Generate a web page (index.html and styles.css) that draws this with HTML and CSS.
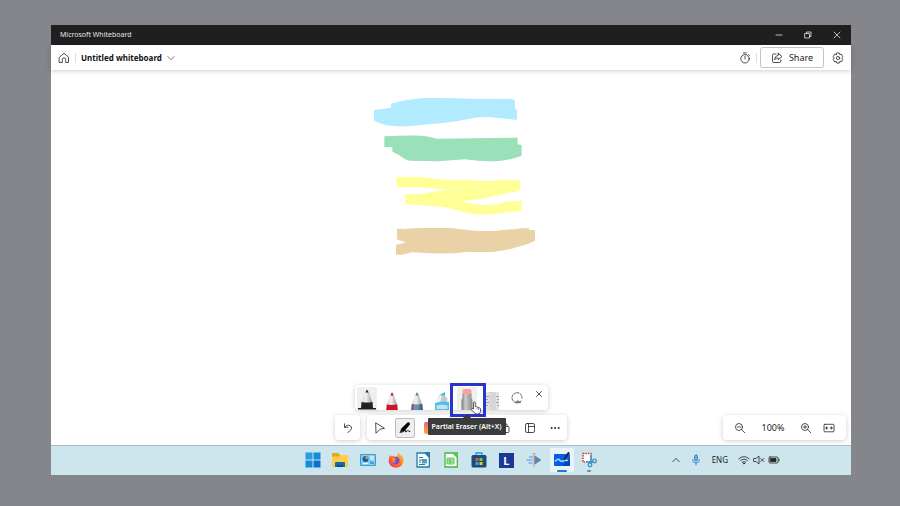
FILE: index.html
```html
<!DOCTYPE html>
<html lang="en">
<head>
<meta charset="utf-8">
<title>Microsoft Whiteboard</title>
<link rel="stylesheet" href="styles.css">
</head>
<body>
<div class="screen">
  <header class="titlebar">
    <span class="app-name">Microsoft Whiteboard</span>
    <div class="window-controls">
      <button aria-label="Minimize"><svg class="i8" viewBox="0 0 8 8"><path d="M1 4h6"/></svg></button>
      <button aria-label="Restore"><svg class="i8" viewBox="0 0 8 8"><path d="M1 2.5h4.500v4.500h-4.500zM2.500 2.500v-1.500h4.500v4.500h-1.500"/></svg></button>
      <button aria-label="Close"><svg class="i8" viewBox="0 0 8 8"><path d="M1 1l6 6M7 1l-6 6"/></svg></button>
    </div>
  </header>

  <nav class="header">
    <button class="plain" aria-label="Home"><svg class="i12" viewBox="0 0 12 12"><path d="M1.500 5.200L6 1.200l4.500 4V10.500H7.700V7.500a1.700 1.700 0 0 0-3.400 0v3H1.500z"/></svg></button>
    <span class="rule"></span>
    <button class="board-name">Untitled whiteboard <svg class="chevron" viewBox="0 0 8 8"><path d="M.7 2.300L4 5.700 7.300 2.300"/></svg></button>
    <div class="header-actions">
      <button class="plain" aria-label="Timer"><svg class="i12" viewBox="0 0 12 12"><circle cx="6" cy="6.800" r="4.200"/><path d="M4.500 1h3M6 4.300V7M9.500 2.500l1 1"/></svg></button>
      <span class="rule"></span>
      <button class="share"><svg class="i12" viewBox="0 0 12 12"><path d="M5 2H2.800Q1.500 2 1.500 3.300v6q0 1.200 1.300 1.200h5.700q1.300 0 1.300-1.200V8M7.200 1.300L11 4.600 7.200 7.700V6Q5 5.800 3.500 7.700 4 3.600 7.200 3.200z"/></svg>Share</button>
      <button class="plain" aria-label="Settings"><svg class="i12" viewBox="0 0 12 12"><circle cx="6" cy="6" r="1.600"/><path d="M4.700 1Q6 .5 7.300 1L7.700 2.600 9.300 2.100 10.800 4.600 9.700 6l1.100 1.400-1.500 2.500-1.600-.5L7.300 11Q6 11.500 4.700 11L4.300 9.400 2.700 9.900 1.200 7.400 2.300 6 1.200 4.600 2.700 2.100 4.300 2.600z"/></svg></button>
    </div>
  </nav>

  <main class="canvas">
    <svg class="drawing" viewBox="0 0 570 540" role="img" aria-label="Highlighter strokes">
      <path fill="#b2eaff" d="M42 75Q68 72 93 68V56Q140 42 200 39Q270 38 330 41L456 42Q465 44 465 51V73H471V105Q440 101 410 98Q365 93 325 102Q260 115 222 116Q185 120 155 123Q110 126 78 121Q60 115 42 107z"/>
      <path fill="#9ae0b8" d="M73 154Q130 151 185 152Q205 154 231 161L473 158V178L485 180V212Q455 224 417 228Q370 231 315 223Q275 226 235 229L150 227Q140 227 131 220Q115 207 97 200V186H73z"/>
      <path fill="#ffff98" d="M110 276H185Q210 281 265 285H320Q380 291 430 285H480V317Q470 321 435 326Q405 334 365 341L302 349Q330 354 345 358Q380 362 412 357Q430 350 455 348H485V379Q455 379 425 385Q375 392 332 386Q305 381 280 373Q250 364 220 364L135 357V327H185Q220 320 265 316H312Q255 316 180 307H110z"/>
      <path fill="#ebd2a6" d="M111 431H128L132 433Q155 429 185 429H275Q320 435 355 438H405Q430 433 465 433Q480 429 505 429L508 435H525V467Q505 478 475 485Q445 495 400 501L320 501Q270 507 215 505L155 502Q135 508 126 509H108V479Q125 477 138 472Q120 468 111 463z"/>
    </svg>

    <div class="dock">
      <div class="pen-tray">
        <button class="pen pen-active" aria-label="Black pen"><svg viewBox="0 0 20 23"><defs><linearGradient id="cone"><stop stop-color="#d0d0d0"/><stop offset=".4" stop-color="#f2f2f2"/><stop offset="1" stop-color="#999"/></linearGradient></defs><path fill="url(#cone)" d="M4.500 16L8.300 4.500h3.400l3.800 11.500z"/><path fill="#222" d="M8.300 5.500L10 2.500 11.700 5.500zM4.500 15q5.500 1 11 0l.5 6H4zM1 21h18v1.500H1z"/></svg></button>
        <button class="pen" aria-label="Red pen"><svg viewBox="0 0 20 23"><path fill="url(#cone)" d="M4.800 18L8.300 7.500h3.400l3.500 10.500z"/><path fill="#ca1829" d="M8.300 8.500L10 5l1.700 3.500zM4.700 17.500q5.300.8 10.600 0l.5 5.500H4.200z"/></svg></button>
        <button class="pen" aria-label="Galaxy pen"><svg viewBox="0 0 20 23"><defs><linearGradient id="galaxy"><stop stop-color="#56446d"/><stop offset=".3" stop-color="#9d80ad"/><stop offset=".6" stop-color="#4f9bab"/><stop offset="1" stop-color="#403b74"/></linearGradient></defs><path fill="url(#cone)" d="M4.800 18L8.300 7.500h3.400l3.500 10.500z"/><path fill="#368b80" d="M8.300 8.500L10 5l1.700 3.500z"/><path fill="url(#galaxy)" d="M4.700 17q5.300.8 10.600 0l.5 6H4.200z"/></svg></button>
        <button class="pen" aria-label="Highlighter"><svg viewBox="0 0 20 23"><path fill="#37bdf1" d="M7.500 8l5.500-3v4.500H7z"/><path fill="#c6c9cb" d="M5 11.500L7 8.500h6l2.300 3v4.500H5z"/><path fill="#f0f0f0" d="M5 11.500L7 8.500h3l-2 7.500H5z"/><path fill="#42c5f5" d="M3 16q7-2.500 14-1v8H3z"/><path fill="#d8dadb" d="M4.500 18.500q5.500-1.500 11 0V22h-11z"/></svg></button>
        <div class="eraser">
          <button class="pen pen-hover" aria-label="Eraser" aria-describedby="eraser-tip"><svg viewBox="0 0 20 23"><defs><linearGradient id="barrel"><stop stop-color="#777"/><stop offset=".35" stop-color="#ccc"/><stop offset="1" stop-color="#888"/></linearGradient></defs><path fill="#ff9da4" d="M5.500 8V4q0-2 2-2h5q2 0 2 2v4z"/><path fill="url(#barrel)" d="M5.500 7h9v4q1 1 1 3v9H4.500v-9q0-2 1-3z"/></svg></button>
          <span class="focus-frame"></span>
          <span class="tooltip" id="eraser-tip" role="tooltip">Partial Eraser (Alt+X)</span>
          <svg class="pointer" viewBox="0 0 12 14"><path fill="#fff" stroke="#333" stroke-width=".8" d="M3.500 8V2q0-1 .9-1t.9 1v3.500q1.500-.4 1.700.7 1.400-.5 1.700.7 1.600-.5 1.800.9V10q0 3-2.500 3H6Q4.500 12 1 8.500 1.500 6.500 3.500 8z"/><path fill="none" stroke="#555" stroke-width=".6" d="M7 6.500v2M8.700 7v2"/></svg>
        </div>
        <button class="pen" aria-label="Ruler"><svg viewBox="0 0 20 23"><path fill="#d6d6d6" d="M4 5h13v18H4z"/><path fill="#e4e4e4" d="M4 5h3v18H4zM14 5h3v18h-3z"/><path fill="none" stroke="#8c8c8c" stroke-width=".8" d="M4 9.500h3M4 12.500h2M4 15.500h3M4 18.500h2M17 9.500h-3M17 12.500h-2M17 15.500h-3M17 18.500h-2"/></svg></button>
        <button class="lasso" aria-label="Lasso select"><svg class="i12" viewBox="0 0 12 12"><path stroke-dasharray="2 1.400" d="M4.500 10.500A5 5 0 1 1 11 6"/><path d="M5 10.800q0-2.300 2-1.800 1.200.4 2.500 1.700M6 11q2.500.5 4-2"/></svg></button>
        <button class="tray-close" aria-label="Close pen tray"><svg class="i8" viewBox="0 0 8 8"><path d="M1.500 1.500l5 5M6.500 1.500l-5 5"/></svg></button>
      </div>

      <div class="tool-row">
        <div class="tools">
          <div class="card"><button class="tool" aria-label="Undo"><svg class="i12" viewBox="0 0 12 12"><path d="M2.500 1.800v3.500H6M2.500 5.300Q4.500 3.200 6.500 3.200 9.500 3.500 9.700 6.200 9.500 8.200 5.700 10.500"/></svg></button></div>
          <div class="card">
            <button class="tool" aria-label="Select"><svg class="i12" viewBox="0 0 12 12"><path d="M2 1l8.500 5.300L6 7.200 2.300 11z"/></svg></button>
            <button class="tool" aria-label="Inking" aria-pressed="true"><span class="tool-on"><svg class="i12" viewBox="0 0 12 12"><path class="solid" d="M3 6.300L8.700.8q1.300-.5 1.800.4.400.8-.3 1.700L5.300 8.700l-3.500.9z"/><path d="M1 10.500q3 0 5-2.200 1.300-.6.500 1.700 2-.8 2.500-1.800.5 2 2 1.300"/></svg></span></button>
            <button class="tool" aria-label="Notes"><svg class="i12" viewBox="0 0 12 12"><defs><linearGradient id="note" x2="0" y2="1"><stop stop-color="#f05d8b"/><stop offset="1" stop-color="#ffae2e"/></linearGradient></defs><rect width="12" height="12" rx="2" fill="url(#note)" stroke="none"/></svg></button>
            <button class="tool" aria-label="Reactions"></button>
            <button class="tool" aria-label="Text"></button>
            <button class="tool" aria-label="Shapes"><svg class="i12" viewBox="0 0 12 12"><circle cx="5" cy="4.500" r="3.500"/><rect x="4" y="4.500" width="6" height="6" rx="1" fill="#fff"/></svg></button>
            <button class="tool" aria-label="Templates"><svg class="i12" viewBox="0 0 12 12"><rect x="1.500" y="1.500" width="9" height="9" rx="1.500"/><path d="M4.500 1.500v9M4.500 4.500h6"/></svg></button>
            <button class="tool" aria-label="More"><svg class="i12" viewBox="0 0 12 12"><g class="solid"><circle cx="2.500" cy="6" r=".6"/><circle cx="6" cy="6" r=".6"/><circle cx="9.500" cy="6" r=".6"/></g></svg></button>
          </div>
        </div>
        <div class="card zoom">
          <button class="plain" aria-label="Zoom out"><svg class="i12" viewBox="0 0 12 12"><circle cx="5" cy="5" r="3.500"/><path d="M3.500 5h3M7.500 7.500l3.300 3.300"/></svg></button>
          <span class="zoom-value">100%</span>
          <button class="plain" aria-label="Zoom in"><svg class="i12" viewBox="0 0 12 12"><circle cx="5" cy="5" r="3.500"/><path d="M3.500 5h3M5 3.500v3M7.500 7.500l3.300 3.300"/></svg></button>
          <button class="plain" aria-label="Fit to screen"><svg class="i12" viewBox="0 0 12 12"><rect x="1" y="2.300" width="10" height="7.500" rx=".8"/><path d="M2.300 6h2.500M3.700 4.800v2.400M9.700 6H7.200M8.300 4.800v2.400"/></svg></button>
        </div>
      </div>
    </div>
  </main>

  <footer class="taskbar">
    <div class="apps">
      <button aria-label="Start"><svg class="app" viewBox="0 0 16 16"><path fill="#239fe5" d="M.5.500h7v7h-7z"/><path fill="#158cda" d="M8.500.5h7v7h-7zM.5 8.500h7v7h-7z"/><path fill="#0873c9" d="M8.500 8.500h7v7h-7z"/></svg></button>
      <button aria-label="File Explorer"><svg class="app" viewBox="0 0 16 16"><path fill="#e5a51e" d="M0 2q0-1 1-1h5l2 2h6v4H0z"/><path fill="#ffcd48" d="M0 4.500h6.500L8 3h7q1 0 1 1v10q0 1-1 1H1q-1 0-1-1z"/><path fill="#116bb1" d="M3 15v-4q0-1 1-1h8q1 0 1 1v4z"/><path fill="#0b4e86" d="M5 13h6v2H5z"/></svg></button>
      <button aria-label="Control Panel"><svg class="app" viewBox="0 0 16 16"><rect y="2" width="16" height="12" rx="1" fill="#3e9acb"/><rect x="1" y="3" width="14" height="10" fill="#83d0f2"/><circle cx="5.500" cy="7" r="3" fill="#0964ad"/><path fill="#f68c36" d="M5.500 7V4a3 3 0 0 1 3 3z"/><path stroke="#fff" d="M10 5h4M10 7h4M3 11.500h5"/><path stroke="#1474b8" d="M11 9v3M13 10v2"/></svg></button>
      <button aria-label="Firefox"><svg class="app" viewBox="0 0 16 16"><defs><linearGradient id="fox" x1="1" x2="0" y2="1"><stop stop-color="#ffd43e"/><stop offset=".45" stop-color="#ff7a29"/><stop offset="1" stop-color="#ed276b"/></linearGradient></defs><path fill="url(#fox)" d="M2.500 3L3.500 4.500Q5 3.500 6 3.700L7 5l3-2V.5q2 1 2.500 3l1-.5q2 2.500 2 5.500A7.500 7.300 0 0 1 .5 8.500Q.5 5 2.500 3z"/><circle cx="8" cy="8.500" r="3.500" fill="#7150c9"/><path fill="#ff9731" d="M4 6q3-.5 4.500 1L6 8.500 8 10q-2 1-3.500-.5z"/></svg></button>
      <button aria-label="Writer"><svg class="app" viewBox="0 0 16 16"><path fill="#fff" stroke="#247ca8" stroke-width="1.300" d="M2 1h8l4.300 4.300V15H2z"/><path fill="#247ca8" d="M9 0h6v6z"/><path stroke="#247ca8" d="M4 5.500h4M4 8h7M4 10h2M4 12.500h6"/><path fill="#4f9ec3" d="M7 7h5v4.500H7z"/></svg></button>
      <button aria-label="Calc"><svg class="app" viewBox="0 0 16 16"><path fill="#fff" stroke="#43b63f" stroke-width="1.300" d="M2 1h8l4.300 4.300V15H2z"/><path fill="#58c94c" d="M9 0h6v6z"/><path stroke="#43b63f" stroke-width=".8" fill="#d8f4ce" d="M4 6h7v6H4zM4 8h7M4 10h7M7 6v6"/></svg></button>
      <button aria-label="Microsoft Store"><svg class="app" viewBox="0 0 16 16"><path fill="none" stroke="#2499d5" stroke-width="1.300" d="M5 5V1h6v4"/><rect x=".5" y="3" width="15" height="12.500" rx="1.500" fill="#194d80"/><path fill="#f05430" d="M4.500 6h3v3h-3z"/><path fill="#8bc341" d="M8.500 6h3v3h-3z"/><path fill="#35a9e6" d="M4.500 10h3v3h-3z"/><path fill="#fbc02e" d="M8.500 10h3v3h-3z"/></svg></button>
      <button aria-label="L app"><span class="letter">L</span></button>
      <button aria-label="Media tool"><svg class="app" viewBox="0 0 16 16"><path fill="#5d83b3" d="M8 3l7.500 5L8 13z"/><path stroke="#75b1e1" stroke-width="1.600" d="M3 5h4M.5 8h6M2.500 11h4"/><path stroke="#e69b8c" d="M8 1v14M6.500 1.500h3"/></svg></button>
      <button class="current" aria-label="Whiteboard"><svg class="app" viewBox="0 0 16 16"><rect y="2" width="16" height="12" rx="1" fill="#075fe0"/><path fill="#0647b7" d="M8 14l8-8v7q0 1-1 1z"/><path fill="none" stroke="#9cdcff" stroke-width="1.500" d="M1 9.500Q4 6 5.500 8T9 9t5-.5"/><path stroke="#202d3d" stroke-width="2.200" stroke-linecap="round" d="M14.500 1L10.500 7"/></svg></button>
      <button class="running" aria-label="Snipping Tool"><svg class="app" viewBox="0 0 16 16"><rect x="2" y="1.500" width="8" height="8.500" fill="#fff" stroke="#d63c2b" stroke-width="1.500" stroke-dasharray="1.500 1"/><path fill="none" stroke="#3796ca" stroke-width="1.500" d="M10 3v8M5 10h8"/><circle cx="9" cy="13" r="1.800" fill="none" stroke="#3796ca" stroke-width="1.300"/><circle cx="13.500" cy="9" r="1.800" fill="none" stroke="#3796ca" stroke-width="1.300"/></svg></button>
    </div>
    <div class="status">
      <button class="plain" aria-label="Show hidden icons"><svg class="i8" viewBox="0 0 8 8"><path d="M.8 5.700L4 2.300l3.200 3.400"/></svg></button>
      <button class="plain" aria-label="Microphone"><svg class="i12" viewBox="0 0 12 12"><rect x="4.500" y="1" width="3" height="6" rx="1.500" fill="#69a9d8" stroke="#2c77bf"/><path stroke="#2c77bf" d="M2.500 5.500q0 3.500 3.500 3.500t3.500-3.500M6 9v2"/></svg></button>
      <span class="language">ENG</span>
      <button class="plain quick" aria-label="Network, volume and battery">
        <svg class="i12" viewBox="0 0 12 12"><path d="M.8 4.800q5.200-4.600 10.400 0M2.500 6.500q3.500-3 7 0M4.200 8.200q1.800-1.500 3.600 0"/><circle class="solid" cx="6" cy="9.500" r=".6"/></svg>
        <svg class="i12" viewBox="0 0 12 12"><path d="M1 4.500h2L6 2v8L3 7.500H1zM7.800 4.500l3 3M10.800 4.500l-3 3"/></svg>
        <svg class="i12" viewBox="0 0 12 12"><rect x="1" y="3" width="9" height="6" rx="1"/><path class="solid" d="M2.500 4.500h5.500v3H2.500zM11 5v2"/></svg>
      </button>
    </div>
  </footer>
</div>
</body>
</html>
```

FILE: styles.css
```css
* { box-sizing: border-box; }

body {
  margin: 0;
  min-height: 100vh;
  display: flex;
  padding: 25px 49px 31px 51px;
  background: #85868b;
  color: #242424;
  font: 8px/12px "Noto Sans", "Open Sans", sans-serif;
}

button {
  display: flex;
  align-items: center;
  justify-content: center;
  margin: 0;
  padding: 0;
  border: 0;
  background: none;
  color: inherit;
  font: inherit;
}

svg { display: block; flex: none; }

.i8, .i12 {
  fill: none;
  stroke: currentColor;
  stroke-width: 0.8;
  stroke-linejoin: round;
  stroke-linecap: round;
}
.i8 { width: 8px; height: 8px; }
.i12 { width: 12px; height: 12px; }
.solid { fill: currentColor; }

.plain { width: 16px; height: 20px; }

.screen {
  flex: 1;
  display: flex;
  flex-direction: column;
  background: #fff;
}

/* Title bar */
.titlebar {
  display: flex;
  justify-content: space-between;
  height: 20px;
  background: #1f1f1f;
  color: #e6e6e6;
}
.app-name {
  padding-left: 9px;
  font-size: 7px;
  line-height: 20px;
}
.window-controls { display: flex; }
.window-controls button { width: 29px; }

/* Document header */
.header {
  display: flex;
  align-items: center;
  height: 25px;
  padding: 0 5px;
  box-shadow: 0 1px 5px #0003;
}
.rule {
  width: 1px;
  height: 10px;
  margin: 0 3px;
  background: #ddd;
}
.board-name {
  gap: 5px;
  margin-left: 2px;
  font-weight: 700;
  color: #111;
}
.chevron {
  width: 8px;
  height: 8px;
  fill: none;
  stroke: #555;
  stroke-width: 0.8;
}
.header-actions {
  display: flex;
  align-items: center;
  margin-left: auto;
}
.share {
  gap: 6px;
  width: 64px;
  height: 21px;
  margin-right: 6px;
  border: 1px solid #c4c4c4;
  border-radius: 3px;
  font-size: 9px;
}

/* Board */
.canvas {
  flex: 1;
  display: flex;
  flex-direction: column;
  justify-content: space-between;
  padding: 15px 5px 5px;
}
.drawing {
  width: 190px;
  height: 180px;
  align-self: center;
  margin-left: 8px;
}
.dock {
  display: flex;
  flex-direction: column;
  gap: 5px;
}

/* Pen tray */
.pen-tray {
  display: flex;
  align-items: flex-end;
  align-self: center;
  gap: 5px;
  height: 25px;
  padding: 0 2px;
  border-radius: 4px;
  background: #fff;
  box-shadow: 0 1px 5px #0003;
}
.pen {
  width: 20px;
  height: 23px;
  border-radius: 2px 2px 0 0;
}
.pen svg { width: 20px; height: 23px; }
.pen-active, .pen-hover { background: #efefef; }
.lasso { width: 20px; height: 25px; }
.tray-close {
  width: 14px;
  height: 18px;
  align-self: flex-start;
}
.eraser { position: relative; }
.focus-frame {
  position: absolute;
  inset: -4px -9px -7px -7px;
  border: 3px solid #2a34cf;
}
.tooltip {
  position: absolute;
  top: 31px;
  left: 50%;
  transform: translateX(-50%);
  padding: 2px 4px;
  border-radius: 1px;
  background: #3b3b3b;
  color: #fff;
  font-size: 7px;
  font-weight: 600;
  line-height: 13px;
  white-space: nowrap;
}
.tooltip::before {
  content: "";
  position: absolute;
  left: 50%;
  bottom: 100%;
  margin-left: -4px;
  border: 4px solid transparent;
  border-top-width: 0;
  border-bottom-color: #3b3b3b;
}
.pointer {
  position: absolute;
  top: 14px;
  left: 13px;
  width: 12px;
  height: 14px;
}

/* Toolbars */
.tool-row {
  display: grid;
  grid-template-columns: 1fr auto 1fr;
}
.tools {
  grid-column: 2;
  display: flex;
  gap: 7px;
}
.card {
  display: flex;
  border-radius: 4px;
  background: #fff;
  box-shadow: 0 1px 5px #0003;
}
.tool { width: 25px; height: 25px; }
.tool-on {
  display: grid;
  place-items: center;
  width: 20px;
  height: 20px;
  border: 1px solid #bdbdbd;
  border-radius: 2px;
  background: #eee;
  color: #000;
}
.zoom {
  justify-self: end;
  align-items: center;
  width: 123px;
  padding: 0 9px;
}
.zoom-value {
  flex: 1;
  text-align: center;
  font-size: 9px;
}
.zoom .plain + .plain { margin-left: 7px; }

/* Taskbar */
.taskbar {
  display: grid;
  grid-template-columns: 1fr 304px 1fr;
  height: 30px;
  padding-bottom: 1px;
  border-top: 1px solid #aebdc3;
  background: #cde5ed;
}
.apps {
  grid-column: 2;
  display: grid;
  grid-template-columns: repeat(11, 1fr);
}
.apps button { position: relative; }
.app { width: 16px; height: 16px; }
.letter {
  width: 15px;
  height: 15px;
  background: #1b3797;
  color: #fff;
  font-size: 11px;
  font-weight: 700;
  line-height: 15px;
}
.current {
  align-self: center;
  justify-self: center;
  width: 24px;
  height: 24px;
  border-radius: 2px;
  background: #e8f4f9;
}
.current::after, .running::after {
  content: "";
  position: absolute;
  left: 50%;
  bottom: 0;
  width: 10px;
  height: 2px;
  margin-left: -5px;
  border-radius: 1px;
  background: #1681cb;
}
.running::after {
  bottom: 2px;
  width: 4px;
  margin-left: -2px;
  background: #7c878c;
}
.status {
  display: flex;
  align-items: center;
  gap: 4px;
  justify-self: end;
  padding-right: 71px;
}
.language { margin: 0 6px 0 4px; font-size: 8px; }
.quick { width: auto; gap: 3px; }
```
